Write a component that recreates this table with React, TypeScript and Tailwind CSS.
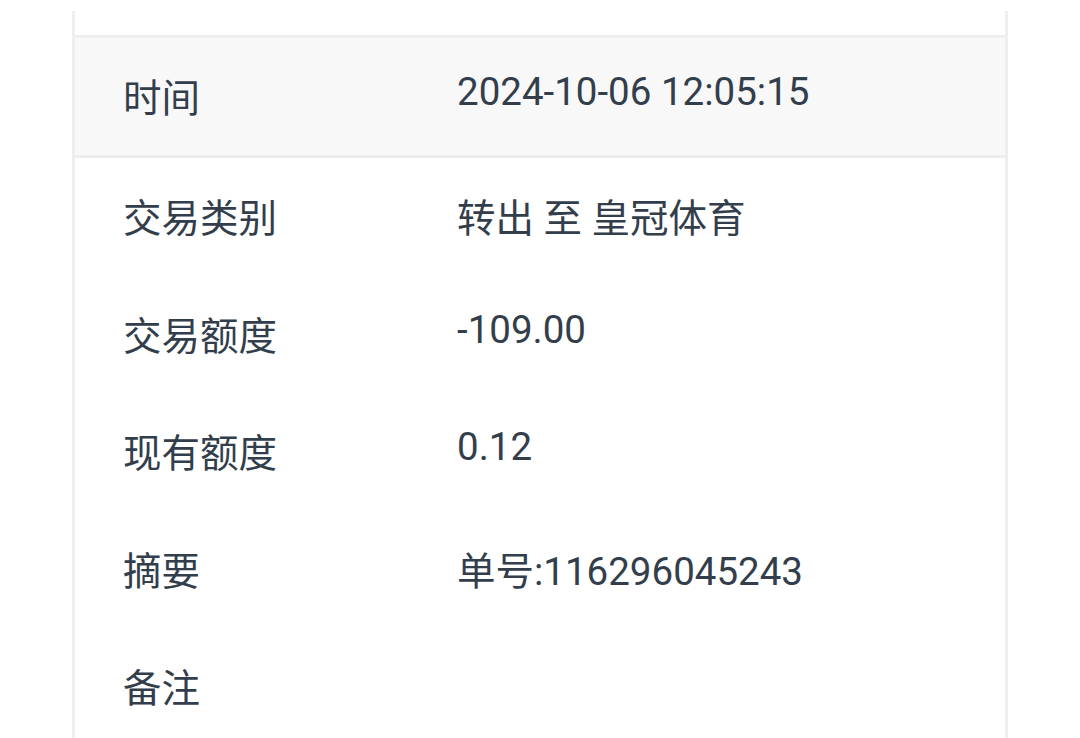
const rows = [
  { label: "交易类别", value: "转出 至 皇冠体育" },
  { label: "交易额度", value: "-109.00", num: true },
  { label: "现有额度", value: "0.12", num: true },
  { label: "摘要", value: "单号:116296045243" },
  { label: "备注", value: "" },
];

export default function App() {
  return (
    <div
      className="w-[1080px] h-[738px] overflow-hidden bg-white"
      style={{ fontFamily: 'Roboto, "Noto Sans CJK SC", sans-serif' }}
    >
      <div className="mx-[72px] mt-[11px] border-x-[3px] border-[#eeeeee] text-[38.5px] text-[#333e4c]">
        <div className="h-[27px] border-b-[3px] border-[#eeeeee]" />
        <div className="flex items-center h-[120px] pt-[5px] bg-[#f8f8f8] border-b-[3px] border-[#eeeeee]">
          <div className="w-[382px] pl-[48px]">时间</div>
          <div className="pb-[14px]">2024-10-06 12:05:15</div>
        </div>
        {rows.map((r) => (
          <div key={r.label} className="flex items-center h-[117.5px] pt-[5px]">
            <div className="w-[382px] pl-[48px]">{r.label}</div>
            <div className={r.num ? "pb-[14px]" : ""}>{r.value}</div>
          </div>
        ))}
      </div>
    </div>
  );
}
